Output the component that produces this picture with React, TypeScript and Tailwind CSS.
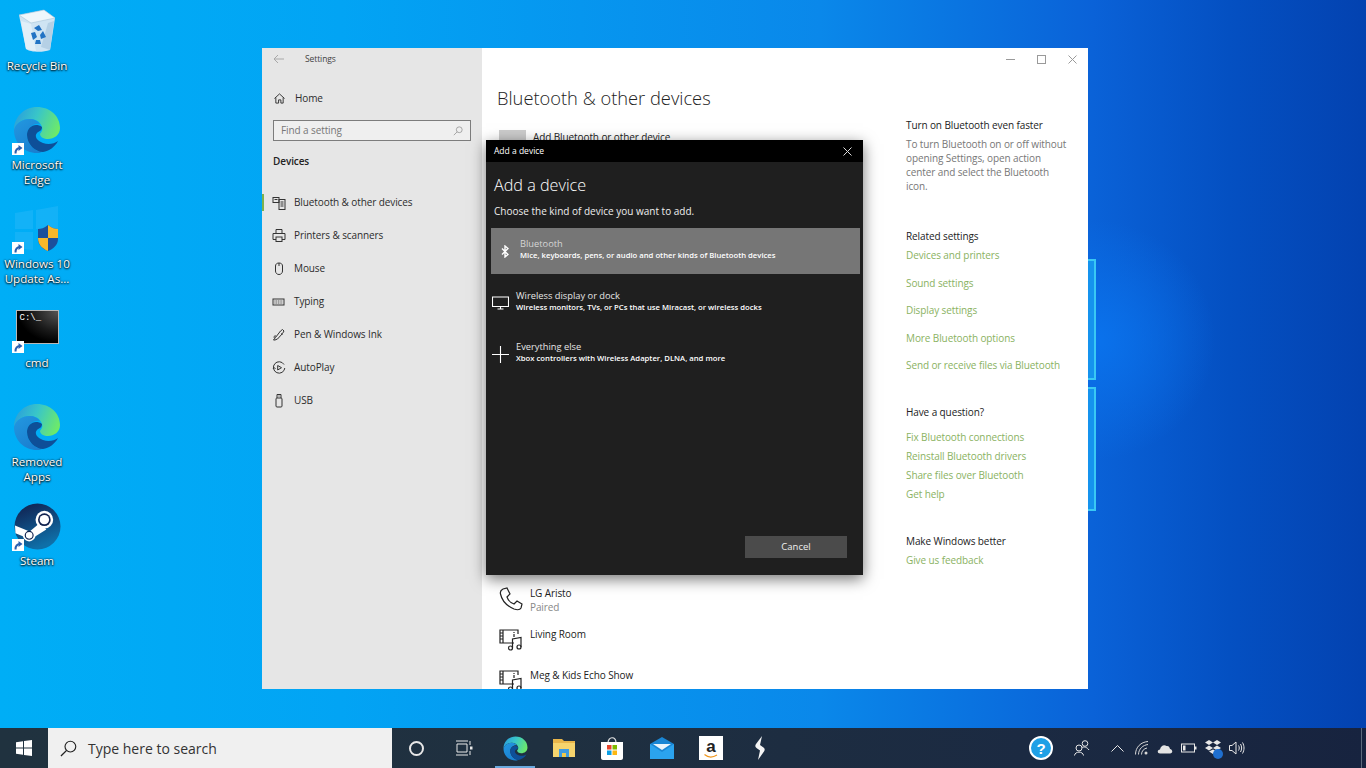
import type { ReactNode } from 'react';

type IconProps = { className?: string };

const line = { fill: 'none', stroke: 'currentColor', strokeWidth: 1 };

function ShortcutBadge() {
  return (
    <span className="absolute left-0 bottom-0 flex h-[12px] w-[12px] items-center justify-center bg-white">
      <svg viewBox="0 0 12 12" className="h-[12px] w-[12px]">
        <path d="M3.5 10.5 C3.5 6.5 5 5 8 5" fill="none" stroke="#2a5fb0" strokeWidth="2" />
        <path d="M6.5 2 L10.5 5 L6.5 8 Z" fill="#2a5fb0" />
      </svg>
    </span>
  );
}

function EdgeLogo({ className, id }: IconProps & { id: string }) {
  return (
    <svg viewBox="0 0 48 48" className={className}>
      <defs>
        <linearGradient id={`${id}-top`} x1="0" y1="0.3" x2="1" y2="0.6">
          <stop offset="0" stopColor="#2a9fdc" />
          <stop offset="0.45" stopColor="#39c6c8" />
          <stop offset="1" stopColor="#6eea68" />
        </linearGradient>
        <linearGradient id={`${id}-left`} x1="0" y1="0" x2="0.6" y2="1">
          <stop offset="0" stopColor="#2398e0" />
          <stop offset="1" stopColor="#1a7fd0" />
        </linearGradient>
      </defs>
      <path d="M1 24 C1 11 11 1 24 1 C37 1 47 10 47 22 C47 29 41 33 35 33 C31 33 27 31 27 28 C28 26 30 25 29 21 C27 15 22 13 17 13 C9 13 3 17 1 24 Z" fill={`url(#${id}-top)`} />
      <path d="M1 24 C3 17 9 13 17 13 C21 13 25 15 27 18 C20 17 14 22 14 29 C14 38 21 45 29 46 C27 47 25 47 24 47 C11 47 1 37 1 24 Z" fill={`url(#${id}-left)`} />
      <path d="M29 21 C22 16 14 21 14 29 C14 38 22 46 30 46 C36 45 42 41 45 35 C41 38 35 39 30 37 C24 35 21 30 24 27 C26 25 29 25 29 21 Z" fill="#0e4f98" />
    </svg>
  );
}

function RecycleBin() {
  return (
    <svg viewBox="0 0 40 44" className="h-[44px] w-[40px]">
      <path d="M2 6 L27 1 L38 9 L33 41 C25 44 13 43 9 40 Z" fill="#cfe4f3" />
      <path d="M2 6 L27 1 L38 9 L14 14 Z" fill="#eef6fb" stroke="#a8c4d8" strokeWidth="0.6" />
      <path d="M9 40 L4 12 L14 15 L19 42 Z" fill="#e2eff8" />
      <path d="M24 38 L33 41 L37 12 L31 14 Z" fill="#b5d0e5" />
      <path d="M17 19 L22 16 L25 21 L21 22 Z M26 22 L29 28 L24 30 L23 26 Z M14 24 L18 23 L20 28 L16 31 Z M19 31 L23 31 L24 35 L18 35 Z" fill="#2273c4" />
    </svg>
  );
}

function UpdateAssistant() {
  return (
    <svg viewBox="0 0 48 48" className="h-[48px] w-[48px]">
      <path d="M2 8 L20 5 L20 24 L2 24 Z M23 5 L45 1 L45 24 L23 24 Z M2 27 L20 27 L20 45 L2 43 Z" fill="#23b6f7" opacity="0.55" />
      <path d="M35 20 C31 23 28 24 25 24 L25 34 C25 40 30 44 35 46 C40 44 45 40 45 34 L45 24 C42 24 39 23 35 20 Z" fill="#1c4f9c" />
      <path d="M35 20 C39 23 42 24 45 24 L45 33 L35 33 Z M25 33 L35 33 L35 46 C30 44 25 40 25 33 Z" fill="#f8b72a" />
    </svg>
  );
}

function CmdIcon() {
  return (
    <div className="mb-[3px] h-[34px] w-[43px] border border-[#b8b8b8] bg-[radial-gradient(ellipse_at_top_right,#555_0%,#1a1a1a_45%,#000_70%)] pl-[3px] pt-[2px] text-[9px] leading-[10px] text-white [font-family:'Liberation_Mono',monospace]">
      C:\_
    </div>
  );
}

function SteamLogo() {
  return (
    <svg viewBox="0 0 48 48" className="h-[47px] w-[47px]">
      <defs>
        <linearGradient id="steam-bg" x1="0" y1="0" x2="0.4" y2="1">
          <stop offset="0" stopColor="#111c4a" />
          <stop offset="1" stopColor="#0f6fa8" />
        </linearGradient>
      </defs>
      <circle cx="24" cy="24" r="23.5" fill="url(#steam-bg)" />
      <path d="M1 23 L16 29 L27 20 L33 27 L22 34 C20 41 11 41 9 34 L1.5 31 Z" fill="#fff" />
      <circle cx="31" cy="17" r="9" fill="#fff" />
      <circle cx="31" cy="17" r="6.5" fill="#12234f" />
      <circle cx="31" cy="17" r="4.8" fill="#fff" />
      <circle cx="15.5" cy="33" r="4" fill="none" stroke="#12234f" strokeWidth="1.2" />
    </svg>
  );
}

function DesktopIcon({ label, shortcut, children }: { label: ReactNode; shortcut?: boolean; children: ReactNode }) {
  return (
    <div className="flex h-[99px] w-[74px] flex-col items-center">
      <div className="relative flex h-[50px] w-[50px] items-center justify-center -mt-[2px]">
        {children}
        {shortcut && <ShortcutBadge />}
      </div>
      <div className="mt-[2px] text-center text-[11.6px] leading-[15px] text-white [text-shadow:0_1px_2px_#000,0_0_2px_#000]">
        {label}
      </div>
    </div>
  );
}

const navIcons: Record<string, ReactNode> = {
  bluetooth: (
    <>
      <rect x="0.5" y="1.5" width="6" height="5" {...line} />
      <rect x="6.5" y="3.5" width="6" height="10" {...line} />
      <path d="M8 6 H11 M8 8 H11 M8 10 H11 M2 3.5 H5" {...line} />
    </>
  ),
  printer: (
    <>
      <path d="M3.5 4 V0.5 H9.5 V4 M3.5 10.5 H0.5 V4.5 H12.5 V10.5 H9.5" {...line} />
      <rect x="3.5" y="8" width="6" height="4.5" {...line} />
    </>
  ),
  mouse: <path d="M3 4 C3 2 4.5 1 6.5 1 C8.5 1 10 2 10 4 V9 C10 11 8.5 12.5 6.5 12.5 C4.5 12.5 3 11 3 9 Z M6.5 1 V4" {...line} />,
  typing: (
    <>
      <rect x="0.5" y="4" width="11" height="6" {...line} />
      <path d="M2 6 H10 M2 8 H10" fill="none" stroke="currentColor" strokeWidth="0.9" strokeDasharray="1 0.7" />
    </>
  ),
  pen: <path d="M1 12 L3 9.5 L8 3 L10 1.5 L11.5 3 L10 5.5 L5 11 L2.5 12 Z M3.5 8 C1.5 7.5 1 9 2 10 M8.5 5.5 L10 6.5" {...line} />,
  autoplay: (
    <>
      <path d="M11.5 3.5 A5.7 5.7 0 1 0 12.3 7" {...line} />
      <path d="M5.2 4.5 L9 6.7 L5.2 9 Z" {...line} />
      <path d="M0.5 8 L1.6 6.5 L3 8" {...line} />
    </>
  ),
  usb: (
    <>
      <rect x="3.5" y="4" width="6" height="9" rx="1" {...line} />
      <path d="M4.5 4 V0.5 H8.5 V4 M5.5 2 H6 M7 2 H7.5" {...line} />
    </>
  ),
};

const navItems = [
  { key: 'bluetooth', label: 'Bluetooth & other devices', active: true },
  { key: 'printer', label: 'Printers & scanners' },
  { key: 'mouse', label: 'Mouse' },
  { key: 'typing', label: 'Typing' },
  { key: 'pen', label: 'Pen & Windows Ink' },
  { key: 'autoplay', label: 'AutoPlay' },
  { key: 'usb', label: 'USB' },
];

function Sidebar() {
  return (
    <aside className="flex w-[220px] shrink-0 flex-col bg-[#e6e6e6] text-[10px] tracking-[-0.1px] text-[#2c2c2c]">
      <div className="flex h-[22px] items-center pl-[11px]">
        <svg viewBox="0 0 12 10" className="h-[10px] w-[12px] text-[#a8a8a8]">
          <path d="M11 5 H1 M5 1 L1 5 L5 9" {...line} />
        </svg>
        <span className="ml-[20px] text-[8.5px] text-[#444]">Settings</span>
      </div>
      <div className="mt-[18px] flex h-[20px] items-center pl-[12px]">
        <svg viewBox="0 0 12 12" className="h-[11px] w-[11px]">
          <path d="M0.5 6 L6 1 L11.5 6 M2 5 V11 H5 V7.5 H7.5 V11 H10 V5" {...line} />
        </svg>
        <span className="ml-[10px]">Home</span>
      </div>
      <div className="mx-[11px] mt-[12px] flex h-[21px] items-center justify-between border-[1.5px] border-[#7c7c7c] bg-[#efefef] px-[7px] text-[#777]">
        <span>Find a setting</span>
        <svg viewBox="0 0 12 12" className="h-[10px] w-[10px] text-[#999]">
          <circle cx="7.5" cy="4.5" r="3.5" {...line} />
          <path d="M5 7 L1 11" {...line} />
        </svg>
      </div>
      <div className="mt-[13px] pl-[11px] font-semibold text-[#222]">Devices</div>
      <nav className="mt-[17px] flex flex-col">
        {navItems.map((item) => (
          <div key={item.key} className="relative flex h-[33px] items-center pl-[10px]">
            {item.active && <span className="absolute left-0 top-[8px] h-[17px] w-[2px] bg-[#7cb14e]" />}
            <svg viewBox="0 0 13 14" className="h-[14px] w-[14px] shrink-0 text-[#333]">
              {navIcons[item.key]}
            </svg>
            <span className="ml-[8px]">{item.label}</span>
          </div>
        ))}
      </nav>
    </aside>
  );
}

function MediaDeviceIcon() {
  return (
    <svg viewBox="0 0 24 24" className="h-[24px] w-[24px] text-[#222]">
      <path d="M15 16 H1 V3 H19 V7 M1 6 H4 M1 9 H4 M1 12 H4 M4 3 V16" {...line} strokeWidth="1.2" />
      <path d="M15 7 V10 M15 5 V6" {...line} strokeWidth="1.2" />
      <circle cx="11.5" cy="21" r="2" {...line} strokeWidth="1.2" />
      <circle cx="20" cy="20" r="2" {...line} strokeWidth="1.2" />
      <path d="M13.5 21 V12 L22 10.5 V20" {...line} strokeWidth="1.2" />
    </svg>
  );
}

const relatedLinks = ['Devices and printers', 'Sound settings', 'Display settings', 'More Bluetooth options', 'Send or receive files via Bluetooth'];
const helpLinks = ['Fix Bluetooth connections', 'Reinstall Bluetooth drivers', 'Share files over Bluetooth', 'Get help'];

function RightColumn() {
  return (
    <div className="w-[166px] shrink-0 text-[10px] leading-[14px] tracking-[-0.1px]">
      <div className="mt-[70px] text-[#222]">Turn on Bluetooth even faster</div>
      <p className="mt-[5px] text-[#777]">
        To turn Bluetooth on or off without opening Settings, open action center and select the Bluetooth icon.
      </p>
      <div className="mt-[36px] text-[#222]">Related settings</div>
      <div className="mt-[5px] flex flex-col gap-[13.5px] text-[#8ab262]">
        {relatedLinks.map((l) => (
          <div key={l} className="whitespace-nowrap">{l}</div>
        ))}
      </div>
      <div className="mt-[33px] text-[#222]">Have a question?</div>
      <div className="mt-[11px] flex flex-col gap-[5px] text-[#8ab262]">
        {helpLinks.map((l) => (
          <div key={l}>{l}</div>
        ))}
      </div>
      <div className="mt-[33px] text-[#222]">Make Windows better</div>
      <div className="mt-[5px] text-[#8ab262]">Give us feedback</div>
    </div>
  );
}

function SettingsWindow() {
  return (
    <div className="absolute left-[262px] top-[48px] flex h-[641px] w-[826px] overflow-hidden bg-white">
      <Sidebar />
      <main className="relative min-w-0 flex-1">
        <div className="absolute right-[11px] top-[7px] flex justify-end gap-[22px] text-[#9a9a9a]">
          <svg viewBox="0 0 9 9" className="h-[9px] w-[9px]"><path d="M0 4.5 H9" {...line} /></svg>
          <svg viewBox="0 0 9 9" className="h-[9px] w-[9px]"><rect x="0.5" y="0.5" width="8" height="8" {...line} /></svg>
          <svg viewBox="0 0 9 9" className="h-[9px] w-[9px]"><path d="M0.5 0.5 L8.5 8.5 M8.5 0.5 L0.5 8.5" {...line} /></svg>
        </div>
        <div className="flex h-full pl-[15px]">
          <div className="w-[409px] shrink-0 text-[10px] tracking-[-0.1px]">
            <h1 className="mt-[36px] text-[18.3px] leading-[28px] font-light tracking-normal text-[#222]">Bluetooth &amp; other devices</h1>
            <div className="mt-[18px] flex h-[28px] items-start">
              <div className="ml-[2px] h-[28px] w-[27px] bg-[#cccccc]" />
              <span className="ml-[7px] leading-[14px] text-[#222]">Add Bluetooth or other device</span>
            </div>
            <div className="mt-[428px] flex h-[41px] pl-[2px]">
              <svg viewBox="0 0 24 24" className="mt-[1px] h-[24px] w-[24px] text-[#222]">
                <path d="M4 2 L8 1 L11 7 L8 10 C9 13 12 16 15 17 L18 14 L23 17 L22 21 C21 23 18 23 15 22 C8 19 3 14 1.5 7 C1 5 2 3 4 2 Z" {...line} strokeWidth="1.2" />
              </svg>
              <div className="ml-[7px] leading-[14px] text-[#222]">
                <div>LG Aristo</div>
                <div className="text-[#888]">Paired</div>
              </div>
            </div>
            <div className="flex h-[41px] pl-[2px]">
              <MediaDeviceIcon />
              <span className="ml-[7px] leading-[14px] text-[#222]">Living Room</span>
            </div>
            <div className="flex h-[41px] pl-[2px]">
              <MediaDeviceIcon />
              <span className="ml-[7px] leading-[14px] text-[#222]">Meg &amp; Kids Echo Show</span>
            </div>
          </div>
          <RightColumn />
        </div>
      </main>
    </div>
  );
}

function DeviceOption({ icon, title, detail, selected }: { icon: ReactNode; title: string; detail: string; selected?: boolean }) {
  return (
    <div className={`flex h-[46px] items-center pb-[3px] ${selected ? 'bg-[#767676] pl-[4px]' : '-ml-[1px]'}`}>
      <div className="flex w-[20px] justify-center pt-[3px]">{icon}</div>
      <div className={selected ? 'ml-[5px]' : 'ml-[6px]'}>
        <div className={`text-[9.3px] leading-[12px] ${selected ? 'text-[#d5d5d5]' : 'text-[#e6e6e6]'}`}>{title}</div>
        <div className="text-[7.7px] leading-[11px] font-semibold text-white">{detail}</div>
      </div>
    </div>
  );
}

function AddDeviceDialog() {
  return (
    <div className="absolute left-[486px] top-[140px] flex h-[435px] w-[377px] flex-col bg-[#1f1f1f] text-white shadow-[0_4px_14px_rgba(0,0,0,0.55)]">
      <div className="flex h-[22px] shrink-0 items-center justify-between bg-black pl-[8px] pr-[11px] text-[8.5px]">
        <span>Add a device</span>
        <svg viewBox="0 0 9 9" className="h-[9px] w-[9px] text-[#ddd]"><path d="M0.5 0.5 L8.5 8.5 M8.5 0.5 L0.5 8.5" {...line} /></svg>
      </div>
      <h2 className="mt-[12px] pl-[8px] text-[16.2px] leading-[22px] font-light">Add a device</h2>
      <p className="mt-[8px] pl-[8px] text-[10px] leading-[14px] text-[#eee]">Choose the kind of device you want to add.</p>
      <div className="ml-[5px] mr-[3px] mt-[10px] flex flex-col gap-[5.5px]">
        <DeviceOption
          selected
          title="Bluetooth"
          detail="Mice, keyboards, pens, or audio and other kinds of Bluetooth devices"
          icon={
            <svg viewBox="0 0 8 13" className="h-[13px] w-[8px] text-white">
              <path d="M1 3.5 L7 9.5 L4 12 V1 L7 3.5 L1 9.5" fill="none" stroke="currentColor" strokeWidth="1.4" />
            </svg>
          }
        />
        <DeviceOption
          title="Wireless display or dock"
          detail="Wireless monitors, TVs, or PCs that use Miracast, or wireless docks"
          icon={
            <svg viewBox="0 0 17 14" className="h-[14px] w-[17px] text-white">
              <path d="M0.5 1 H16.5 V10.5 H0.5 Z M8.5 10.5 V13 M5.5 13 H11.5" fill="none" stroke="currentColor" strokeWidth="1.1" />
            </svg>
          }
        />
        <DeviceOption
          title="Everything else"
          detail="Xbox controllers with Wireless Adapter, DLNA, and more"
          icon={
            <svg viewBox="0 0 17 17" className="h-[17px] w-[17px] text-white">
              <path d="M8.5 0 V17 M0 8.5 H17" fill="none" stroke="currentColor" strokeWidth="1.1" />
            </svg>
          }
        />
      </div>
      <div className="mb-[17px] mr-[16px] mt-auto flex h-[22px] w-[102px] items-center justify-center self-end bg-[#4b4b4b] text-[9.5px] text-[#f0f0f0]">
        Cancel
      </div>
    </div>
  );
}

function Taskbar() {
  return (
    <footer className="flex h-[40px] shrink-0 items-center bg-[linear-gradient(90deg,#20323f_0%,#1f3040_40%,#1b2a42_75%,#17233f_100%)] text-white">
      <div className="flex w-[48px] justify-center">
        <svg viewBox="0 0 16 16" className="h-[16px] w-[16px]" fill="#fff">
          <path d="M0 2.3 L7 1.3 V7.6 H0 Z M8 1.1 L16 0 V7.6 H8 Z M0 8.4 H7 V14.7 L0 13.7 Z M8 8.4 H16 V16 L8 14.9 Z" />
        </svg>
      </div>
      <div className="flex h-[40px] w-[344px] items-center bg-[#f0f0f0] pl-[12px] text-[#333]">
        <svg viewBox="0 0 18 18" className="h-[17px] w-[17px]">
          <circle cx="11" cy="7" r="5.7" fill="none" stroke="#222" strokeWidth="1.2" />
          <path d="M7 11 L1 17" stroke="#222" strokeWidth="1.4" />
        </svg>
        <span className="ml-[11px] text-[14px]">Type here to search</span>
      </div>
      <div className="flex w-[48px] justify-center">
        <span className="h-[15px] w-[15px] rounded-full border-[2px] border-[#e8e8e8]" />
      </div>
      <div className="flex w-[48px] justify-center">
        <svg viewBox="0 0 18 16" className="h-[16px] w-[18px] text-[#e8e8e8]">
          <path d="M2 4 H12 V12 H2 Z M1 1 H13 M1 15 H13 M15 1 V5 M15 11 V15" {...line} />
          <rect x="15" y="6.5" width="2.5" height="3" fill="currentColor" />
        </svg>
      </div>
      <div className="relative flex h-[40px] w-[54px] items-center justify-center">
        <EdgeLogo id="edge-task" className="h-[25px] w-[25px]" />
        <span className="absolute bottom-0 left-[7px] h-[2px] w-[40px] bg-[#6aa9de]" />
      </div>
      <div className="flex w-[44px] justify-center">
        <svg viewBox="0 0 22 20" className="h-[20px] w-[22px]">
          <path d="M0 1 H9 L11 3 H22 V19 H0 Z" fill="#e9b64a" />
          <path d="M0 5 H22 V19 H0 Z" fill="#f6d46d" />
          <path d="M6 11 H16 V19 H13 V15 H9 V19 H6 Z" fill="#3f9be0" />
          <rect x="9" y="15" width="4" height="4" fill="#f2c94a" />
        </svg>
      </div>
      <div className="flex w-[52px] justify-center">
        <svg viewBox="0 0 24 24" className="h-[24px] w-[24px]">
          <path d="M8 7 C8 0 16 0 16 7" fill="none" stroke="#e8e8e8" strokeWidth="1.2" />
          <path d="M1 6 H23 V22 C23 23 22 24 21 24 H3 C2 24 1 23 1 22 Z" fill="#fff" />
          <rect x="7" y="9" width="4.5" height="4.5" fill="#e8452c" />
          <rect x="12.5" y="9" width="4.5" height="4.5" fill="#7fba00" />
          <rect x="7" y="14.5" width="4.5" height="4.5" fill="#0b9fe6" />
          <rect x="12.5" y="14.5" width="4.5" height="4.5" fill="#fdb813" />
        </svg>
      </div>
      <div className="flex w-[48px] justify-center">
        <svg viewBox="0 0 24 22" className="h-[22px] w-[24px]">
          <path d="M0 7 L12 0 L24 7 V22 H0 Z" fill="#1a86d4" />
          <path d="M0 7 L12 15 L24 7 V22 H0 Z" fill="#2ba3ee" />
          <path d="M3 7 H21 L12 13 Z" fill="#eaf5fc" />
        </svg>
      </div>
      <div className="flex w-[50px] justify-center">
        <div className="flex h-[24px] w-[24px] flex-col items-center justify-center bg-white">
          <span className="text-[17px] leading-[15px] font-bold text-[#222] [font-family:'Liberation_Sans',sans-serif]">a</span>
          <svg viewBox="0 0 14 4" className="h-[4px] w-[14px]">
            <path d="M0.5 0.5 C4 3.5 9 3.5 13 1" fill="none" stroke="#f0971d" strokeWidth="1.2" />
          </svg>
        </div>
      </div>
      <div className="flex w-[48px] justify-center">
        <svg viewBox="0 0 12 24" className="h-[24px] w-[12px]" fill="#f4f4f4">
          <path d="M8 0 L2 8 C1 9.5 1 11 2.5 12 L6 14.5 L4 24 L10 15.5 C11 14 11 12.5 9.5 11.5 L6 9 Z" />
        </svg>
      </div>
      <div className="ml-auto flex items-center">
        <div className="flex w-[24px] justify-center">
          <div className="flex h-[24px] w-[24px] items-center justify-center rounded-full border-[2px] border-white bg-[#1fa0e6] text-[15px] leading-none font-bold text-white [font-family:'Liberation_Sans',sans-serif]">?</div>
        </div>
        <div className="ml-[20px] flex w-[18px] justify-center">
          <svg viewBox="0 0 16 16" className="h-[16px] w-[16px] text-[#e8e8e8]">
            <circle cx="5" cy="8" r="3" {...line} />
            <circle cx="11" cy="3.5" r="2.8" {...line} />
            <path d="M0.5 15.5 C1 11 9 11 9.5 15.5 M8 7.5 C10 6.5 13 7 15 10" {...line} />
          </svg>
        </div>
        <div className="ml-[20px] flex w-[13px] justify-center">
          <svg viewBox="0 0 13 7" className="h-[7px] w-[13px] text-[#e8e8e8]"><path d="M0.5 6.5 L6.5 0.5 L12.5 6.5" {...line} /></svg>
        </div>
        <div className="ml-[11px] flex w-[14px] justify-center">
          <svg viewBox="0 0 14 14" className="h-[14px] w-[14px] text-[#d8d8d8]">
            <path d="M0.5 13.5 C0.5 6 6 1 13 0.5 M3.5 13.5 C3.5 8 8 4 13 3.5 M6.5 13.5 C6.5 10 9 7.5 12 7" {...line} />
            <circle cx="11" cy="12" r="1.5" fill="currentColor" />
          </svg>
        </div>
        <div className="ml-[8px] flex w-[16px] justify-center">
          <svg viewBox="0 0 16 11" className="h-[11px] w-[16px]">
            <path d="M3 10.5 C0 10.5 0 6.5 3 6.5 C3.5 3 7 1 9.5 3 C12 2.5 13 5 13 6 C16 6.5 16 10.5 13 10.5 Z" fill="#e4e4e4" />
          </svg>
        </div>
        <div className="ml-[8px] flex w-[16px] justify-center">
          <svg viewBox="0 0 16 10" className="h-[10px] w-[16px] text-[#e8e8e8]">
            <rect x="0.5" y="1" width="13" height="8" {...line} />
            <rect x="2" y="2.5" width="2.5" height="5" fill="currentColor" />
            <rect x="14" y="3.5" width="1.5" height="3" fill="currentColor" />
          </svg>
        </div>
        <div className="relative ml-[8px] flex w-[16px] justify-center">
          <svg viewBox="0 0 16 16" className="h-[16px] w-[16px]" fill="#e8e8e8">
            <path d="M4 0 L8 2.5 L4 5 L0 2.5 Z M12 0 L16 2.5 L12 5 L8 2.5 Z M4 5.5 L8 8 L4 10.5 L0 8 Z M12 5.5 L16 8 L12 10.5 L8 8 Z M4 11.5 L8 9.5 L12 11.5 L8 14 Z" />
          </svg>
          <span className="absolute bottom-[-3px] right-[-2px] h-[10px] w-[10px] rounded-full bg-[#1f6fd0]" />
        </div>
        <div className="ml-[8px] flex w-[16px] justify-center">
          <svg viewBox="0 0 16 14" className="h-[14px] w-[16px] text-[#e8e8e8]">
            <path d="M0.5 4.5 H3 L7 1 V13 L3 9.5 H0.5 Z M9.5 4.5 C10.5 6 10.5 8 9.5 9.5 M11.5 3 C13 5.5 13 8.5 11.5 11 M13.5 1.5 C15.5 5 15.5 9 13.5 12.5" {...line} />
          </svg>
        </div>
        <div className="ml-[116px] h-[40px] w-[1px] bg-[#5c6a7c] mr-[4px]" />
      </div>
    </footer>
  );
}

export default function App() {
  return (
    <div className="flex h-[768px] w-[1366px] flex-col overflow-hidden [font-family:'Open_Sans','Liberation_Sans',sans-serif]">
      <div className="relative flex-1 bg-[radial-gradient(circle_at_1095px_340px,#0a72ec_0%,rgba(10,110,235,0)_120px),linear-gradient(90deg,#00aef6_0%,#02a4f4_25%,#0a88ea_60%,#0a62d8_80%,#0450c2_90%,#0342b0_100%)]">
        <div className="absolute left-[1060px] top-[259px] h-[121px] w-[36px] border-[2px] border-[#39c8f4] bg-[#1593ee]" />
        <div className="absolute left-[1060px] top-[387px] h-[124px] w-[36px] border-[2px] border-[#39c8f4] bg-[#1593ee]" />

        <div className="flex w-[74px] flex-col pt-[8px]">
          <DesktopIcon label="Recycle Bin"><RecycleBin /></DesktopIcon>
          <DesktopIcon shortcut label={<>Microsoft<br />Edge</>}><EdgeLogo id="edge-a" className="h-[48px] w-[48px]" /></DesktopIcon>
          <DesktopIcon shortcut label={<>Windows 10<br />Update As...</>}><UpdateAssistant /></DesktopIcon>
          <DesktopIcon shortcut label="cmd"><CmdIcon /></DesktopIcon>
          <DesktopIcon label={<>Removed<br />Apps</>}><EdgeLogo id="edge-b" className="h-[48px] w-[48px]" /></DesktopIcon>
          <DesktopIcon shortcut label="Steam"><SteamLogo /></DesktopIcon>
        </div>

        <SettingsWindow />
        <AddDeviceDialog />
      </div>
      <Taskbar />
    </div>
  );
}
